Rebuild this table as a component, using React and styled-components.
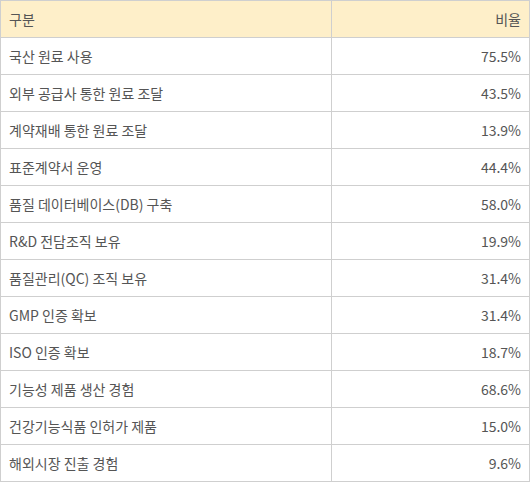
import React from 'react';
import styled, { createGlobalStyle } from 'styled-components';

const rows = [
  ['국산 원료 사용', '75.5%'],
  ['외부 공급사 통한 원료 조달', '43.5%'],
  ['계약재배 통한 원료 조달', '13.9%'],
  ['표준계약서 운영', '44.4%'],
  ['품질 데이터베이스(DB) 구축', '58.0%'],
  ['R&D 전담조직 보유', '19.9%'],
  ['품질관리(QC) 조직 보유', '31.4%'],
  ['GMP 인증 확보', '31.4%'],
  ['ISO 인증 확보', '18.7%'],
  ['기능성 제품 생산 경험', '68.6%'],
  ['건강기능식품 인허가 제품', '15.0%'],
  ['해외시장 진출 경험', '9.6%'],
];

const GlobalStyle = createGlobalStyle`
  body {
    margin: 0;
    background: #fff;
    font-family: "Noto Sans CJK KR", "Noto Sans", sans-serif;
  }
`;

const Table = styled.table`
  width: 530px;
  table-layout: fixed;
  border-collapse: collapse;
  font-size: 14px;
  color: #555;
`;

const Cell = styled.td`
  height: 36px;
  padding: 0 8px;
  border: 1px solid #cfcfcf;
  text-align: ${(p) => (p.$right ? 'right' : 'left')};
  background: ${(p) => (p.$head ? '#feefc9' : '#fff')};
  vertical-align: middle;
  white-space: nowrap;
`;

export default function App() {
  return (
    <>
      <GlobalStyle />
      <Table>
        <colgroup>
          <col style={{ width: 331 }} />
          <col />
        </colgroup>
        <tbody>
          <tr>
            <Cell $head>구분</Cell>
            <Cell $head $right>비율</Cell>
          </tr>
          {rows.map(([label, value]) => (
            <tr key={label}>
              <Cell>{label}</Cell>
              <Cell $right>{value}</Cell>
            </tr>
          ))}
        </tbody>
      </Table>
    </>
  );
}
